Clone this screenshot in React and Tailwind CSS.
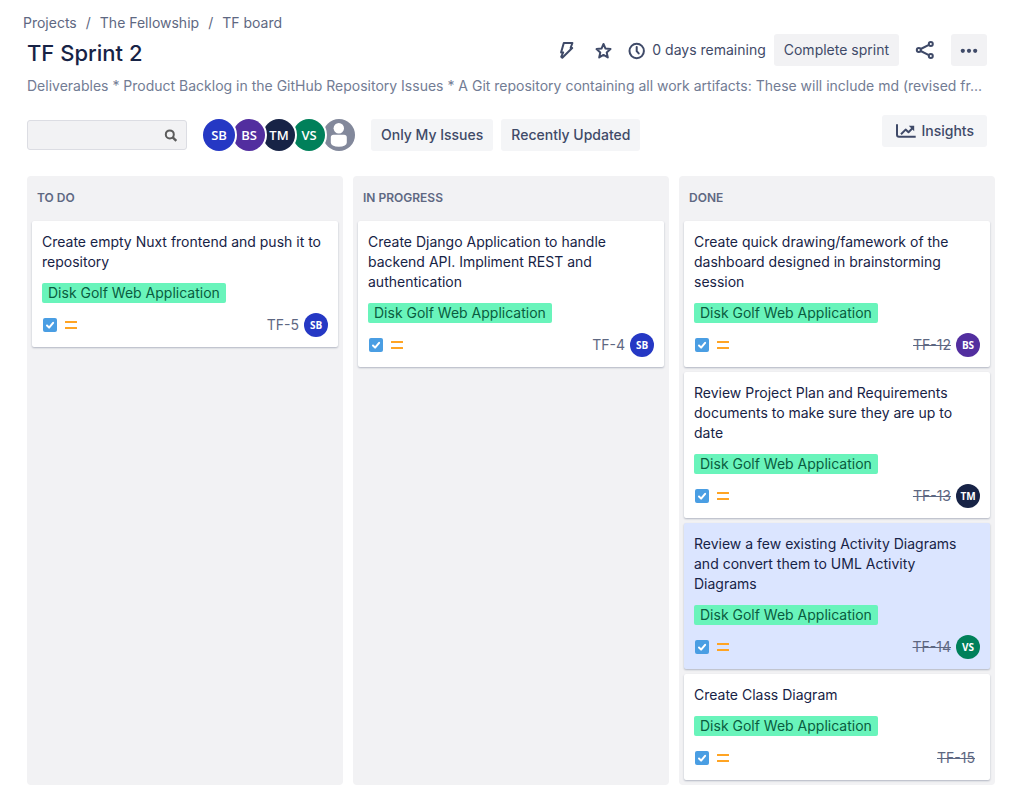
const AVATAR_COLORS = {
  SB: "bg-[#2538c4]",
  BS: "bg-[#522e9f]",
  TM: "bg-[#172346]",
  VS: "bg-[#00805a]",
};

const COLUMNS = [
  {
    title: "TO DO",
    cards: [{ id: "TF-5", text: "Create empty Nuxt frontend and push it to repository", assignee: "SB" }],
  },
  {
    title: "IN PROGRESS",
    cards: [
      { id: "TF-4", text: "Create Django Application to handle backend API. Impliment REST and authentication", assignee: "SB" },
    ],
  },
  {
    title: "DONE",
    done: true,
    cards: [
      { id: "TF-12", text: "Create quick drawing/famework of the dashboard designed in brainstorming session", assignee: "BS" },
      { id: "TF-13", text: "Review Project Plan and Requirements documents to make sure they are up to date", assignee: "TM" },
      { id: "TF-14", text: "Review a few existing Activity Diagrams and convert them to UML Activity Diagrams", assignee: "VS", selected: true },
      { id: "TF-15", text: "Create Class Diagram" },
    ],
  },
];

function BoltIcon() {
  return (
    <svg width="24" height="24" viewBox="0 0 24 24" fill="none" stroke="currentColor" strokeWidth="2" strokeLinejoin="round" aria-hidden="true">
      <path d="M9.8 5h8.6l-1.8 5h1.6L8.3 19.8l-1.1-1L9.2 14.4H7.1z" />
    </svg>
  );
}

function StarIcon() {
  return (
    <svg width="24" height="24" viewBox="0 0 24 24" fill="none" stroke="currentColor" strokeWidth="2" strokeLinejoin="round" aria-hidden="true">
      <path d="M12.5 6l2 4.6 5 .5-3.8 3.4 1.1 4.9-4.3-2.5-4.3 2.5 1.1-4.9-3.8-3.4 5-.5z" />
    </svg>
  );
}

function ClockIcon() {
  return (
    <svg width="24" height="24" viewBox="0 0 24 24" fill="none" stroke="currentColor" strokeWidth="2" strokeLinecap="round" aria-hidden="true">
      <circle cx="12.7" cy="13" r="7.2" />
      <path d="M12.7 9v4.2l2 2.2" />
    </svg>
  );
}

function ShareIcon() {
  return (
    <svg width="24" height="24" viewBox="0 0 24 24" fill="none" stroke="currentColor" strokeWidth="2" aria-hidden="true">
      <circle cx="5.8" cy="12" r="2" />
      <circle cx="17.8" cy="6" r="2" />
      <circle cx="17.8" cy="18" r="2" />
      <path d="M7.7 11l8.2-4.1M7.7 13l8.2 4.1" />
    </svg>
  );
}

function MoreIcon() {
  return (
    <svg width="24" height="24" viewBox="0 0 24 24" fill="currentColor" aria-hidden="true">
      <circle cx="5.8" cy="12.8" r="2.1" />
      <circle cx="12" cy="12.8" r="2.1" />
      <circle cx="18.2" cy="12.8" r="2.1" />
    </svg>
  );
}

function SearchIcon() {
  return (
    <svg width="14" height="14" viewBox="0 0 14 14" fill="none" stroke="currentColor" strokeWidth="2" aria-hidden="true">
      <circle cx="5.8" cy="6.4" r="4" />
      <path d="M8.7 9.3l3.6 3.6" strokeWidth="2.4" />
    </svg>
  );
}

function InsightsIcon() {
  return (
    <svg width="20" height="16" viewBox="0 0 20 16" fill="none" stroke="currentColor" strokeWidth="2" aria-hidden="true">
      <path d="M1 1.3v10.4q0 2 2 2h16.7" />
      <path d="M5 11.2L9.6 6.6l2.9 2.6 4.2-4.2" strokeLinejoin="round" />
      <path d="M12.8 2.7h5.4v5.5z" fill="currentColor" stroke="none" />
    </svg>
  );
}

function TaskIcon() {
  return (
    <svg width="16" height="16" viewBox="0 0 16 16" role="img" aria-label="Task">
      <rect x="1" y="1" width="14" height="14" rx="2" fill="#4a9ee3" />
      <path d="M5 8.5l2.1 2.1 4-4.8" fill="none" stroke="#fff" strokeWidth="2" strokeLinecap="round" strokeLinejoin="round" />
    </svg>
  );
}

function PriorityIcon() {
  return (
    <svg width="16" height="16" viewBox="0 0 16 16" fill="#ffa423" role="img" aria-label="Medium priority">
      <rect x="2" y="4" width="12" height="2" rx="0.3" />
      <rect x="2" y="10" width="12" height="2" rx="0.3" />
    </svg>
  );
}

function PersonIcon() {
  return (
    <svg width="32" height="32" viewBox="0 0 32 32" fill="#fff" aria-hidden="true">
      <circle cx="15.8" cy="9.2" r="5.2" />
      <path d="M7.8 18.6q0-2.8 2.8-2.8h10.4q2.8 0 2.8 2.8v4.8q0 2-2 3-2.400 1.400-6 1.400t-6-1.400q-2-1-2-3z" />
    </svg>
  );
}

function MiniAvatar({ name }) {
  return (
    <span className={`flex size-6 items-center justify-center rounded-full font-['Open_Sans',sans-serif] text-[10px] font-bold text-white ${AVATAR_COLORS[name]}`}>
      {name}
    </span>
  );
}

function Card({ card, done }) {
  return (
    <article className={`rounded-xs px-2.5 pt-[11px] pb-2.5 shadow-[0_1px_2px_rgba(9,30,66,0.28)] ${card.selected ? "bg-[#dbe5ff]" : "bg-white"}`}>
      <p className="mb-[11px] text-[#172346]">{card.text}</p>
      <span className="block w-fit rounded-xs bg-[#69f4bb] px-1.5 text-[#0a5c40]">Disk Golf Web Application</span>
      <div className="mt-2.5 flex h-6 items-center gap-[5px]">
        <TaskIcon />
        <PriorityIcon />
        <a href="#" className={`ml-auto text-[#5e6882] ${card.assignee ? "" : "mr-[5px]"} ${done ? "line-through" : ""}`}>
          {card.id}
        </a>
        {card.assignee && <MiniAvatar name={card.assignee} />}
      </div>
    </article>
  );
}

const AVATARS = [
  ["SB", "z-40"],
  ["BS", "z-30"],
  ["TM", "z-20"],
  ["VS", "z-10"],
];

export default function App() {
  return (
    <main className="bg-white pt-[13px] pr-[19px] pb-5 pl-[27px] font-[Inter,sans-serif] text-[14px] leading-5 text-[#3f4a68]">
      <nav aria-label="Breadcrumb" className="-ml-1">
        <ol className="flex gap-[9px] text-[#5e6882]">
          <li><a href="#">Projects</a></li>
          <li aria-hidden="true">/</li>
          <li><a href="#">The Fellowship</a></li>
          <li aria-hidden="true">/</li>
          <li><a href="#">TF board</a></li>
        </ol>
      </nav>

      <header className="mr-2">
        <div className="mt-px flex h-8 items-center">
          <h1 className="mt-1.5 mr-auto text-[22px] leading-7 font-medium text-[#172346]">TF Sprint 2</h1>
          <button type="button" aria-label="Automation"><BoltIcon /></button>
          <button type="button" aria-label="Star" className="ml-[13px]"><StarIcon /></button>
          <span className="ml-[9px] flex items-center gap-1"><ClockIcon />0 days remaining</span>
          <button type="button" className="ml-2 h-8 rounded-[3px] bg-[#f2f2f4] px-2.5">Complete sprint</button>
          <button type="button" aria-label="Share" className="ml-3.5"><ShareIcon /></button>
          <button type="button" aria-label="More actions" className="ml-3.5 flex h-8 w-9 items-center justify-center rounded-[3px] bg-[#f2f2f4]"><MoreIcon /></button>
        </div>
        <p className="mt-2.5 truncate text-[#727c94]">
          Deliverables * Product Backlog in the GitHub Repository Issues * A Git repository containing all work artifacts: These will include md (revised fr...
        </p>
        <div className="mt-[19px] flex items-start">
          <div className="mt-1 flex items-center">
            <label className="flex h-[30px] w-40 items-center rounded-[3px] border border-[#dcdde3] bg-[#f2f2f4] px-2 text-[#5c5c5c]">
              <input type="text" aria-label="Search this board" className="min-w-0 flex-1 bg-transparent outline-none" />
              <SearchIcon />
            </label>
            <div className="ml-4 flex -space-x-0.5">
              {AVATARS.map(([name, layer]) => (
                <button
                  key={name}
                  type="button"
                  className={`relative flex size-8 items-center justify-center rounded-full font-['Open_Sans',sans-serif] text-[13px] font-semibold text-white ring-2 ring-white ${layer} ${AVATAR_COLORS[name]}`}
                >
                  {name}
                </button>
              ))}
              <button type="button" aria-label="Unassigned" className="size-8 rounded-full bg-[#82889b]"><PersonIcon /></button>
            </div>
            <button type="button" className="ml-4 h-8 rounded-[3px] bg-[#f4f5f7] px-2.5 font-medium">Only My Issues</button>
            <button type="button" className="ml-2 h-8 rounded-[3px] bg-[#f4f5f7] px-2.5 font-medium">Recently Updated</button>
          </div>
          <button type="button" className="ml-auto flex h-8 items-center gap-[5px] rounded-[3px] bg-[#f4f5f7] pr-[13px] pl-3.5 font-medium">
            <InsightsIcon />
            Insights
          </button>
        </div>
      </header>

      <div className="mt-[25px] grid grid-cols-3 gap-2.5">
        {COLUMNS.map((column) => (
          <section key={column.title} className="rounded bg-[#f2f2f4] px-[5px] pb-[5px]">
            <h2 className="px-[5px] pt-3 pb-[13px] text-[12px] font-semibold text-[#5e6882]">{column.title}</h2>
            <div className="flex flex-col gap-[5px]">
              {column.cards.map((card) => (
                <Card key={card.id} card={card} done={column.done} />
              ))}
            </div>
          </section>
        ))}
      </div>
    </main>
  );
}
